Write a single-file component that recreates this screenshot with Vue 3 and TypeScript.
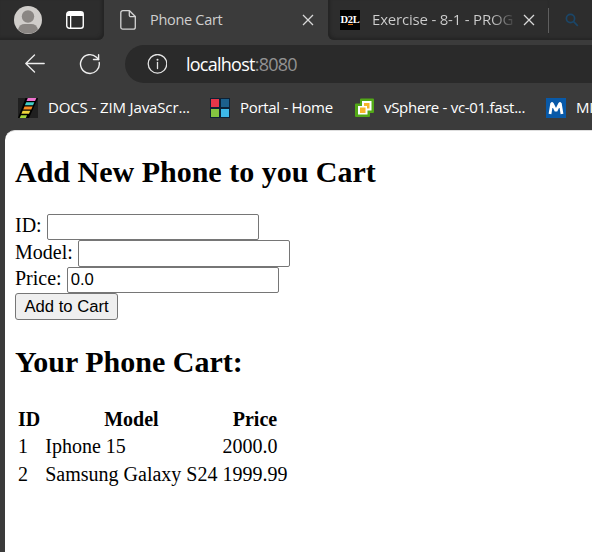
<script setup lang="ts">
import { ref } from 'vue'

interface Phone {
  id: number
  model: string
  price: string
}

const id = ref('')
const model = ref('')
const price = ref('0.0')

const phones = ref<Phone[]>([
  { id: 1, model: 'Iphone 15', price: '2000.0' },
  { id: 2, model: 'Samsung Galaxy S24', price: '1999.99' },
])

function addPhone(): void {
  phones.value.push({ id: Number(id.value), model: model.value, price: price.value })
}
</script>

<template>
  <div class="browser">
    <header class="tabs">
      <div class="lead">
        <svg class="avatar" width="28" height="28" viewBox="0 0 28 28">
          <circle cx="14" cy="14" r="14" fill="#d0cdca" />
          <path d="M4 23.400C5 19.800 7.600 18 10.500 18h7C20.400 18 23 19.800 24 23.400A14 14 0 0 1 4 23.400z" fill="#8a8683" />
          <circle cx="14" cy="10.500" r="6.200" fill="#8a8683" />
        </svg>
        <svg class="panes" width="18" height="18" viewBox="0 0 18 18">
          <rect x="0.750" y="0.750" width="16.500" height="16.500" rx="2.500" fill="none" stroke="#fff" stroke-width="1.400" />
          <path d="M1 5V3a2 2 0 0 1 2-2h12a2 2 0 0 1 2 2v2zM4 5h1.300v12H4z" fill="#fff" />
        </svg>
      </div>
      <div class="tab active">
        <svg class="doc" width="16" height="20" viewBox="0 0 16 20" fill="none" stroke="#d4d4d4" stroke-width="1.300" stroke-linejoin="round">
          <path d="M2.800.7H9.500L15.300 6.500V17.200a2 2 0 0 1-2 2H2.800a2 2 0 0 1-2-2V2.700a2 2 0 0 1 2-2z" />
          <path d="M9.300.8V5.200a1.500 1.500 0 0 0 1.500 1.500h4.400" />
        </svg>
        <span class="title">Phone Cart</span>
        <svg class="close" width="12" height="12" viewBox="0 0 12 12" stroke="#d8d8d8" stroke-width="1.300">
          <path d="M1 1l10 10M11 1L1 11" />
        </svg>
      </div>
      <div class="tab second">
        <span class="d2l">D<i>2</i>L</span>
        <span class="title faded">Exercise - 8-1 - PROG</span>
        <svg class="close" width="12" height="12" viewBox="0 0 12 12" stroke="#d8d8d8" stroke-width="1.300">
          <path d="M1 1l10 10M11 1L1 11" />
        </svg>
      </div>
      <i class="separator"></i>
      <svg class="search" width="14" height="14" viewBox="0 0 14 14" fill="none" stroke="#1b4668" stroke-width="1.700">
        <circle cx="5.500" cy="5.500" r="4.100" />
        <path d="M8.600 8.600l4.200 4.200" />
      </svg>
    </header>

    <div class="toolbar">
      <svg class="back" width="20" height="20" viewBox="0 0 20 20" fill="none" stroke="#eee" stroke-width="1.300" stroke-linecap="round" stroke-linejoin="round">
        <path d="M19.200 9.500H.8M9.500 1L.8 9.500l8.700 8.500" />
      </svg>
      <svg class="reload" width="22" height="22" viewBox="0 0 22 22" fill="none" stroke="#eee" stroke-width="1.400" stroke-linecap="round" stroke-linejoin="round">
        <path d="M20.200 9.500A9.400 9.400 0 1 1 17.500 4.300L19.600 6.500" />
        <path d="M19.600 1.800V6.500H14.500" />
      </svg>
      <div class="address">
        <svg width="20" height="20" viewBox="0 0 20 20" fill="none" stroke="#e4e4e4" stroke-width="1.300">
          <circle cx="10.500" cy="9.800" r="9.300" />
          <path d="M10.500 8.500v6" stroke-linecap="round" />
          <circle cx="10.500" cy="5.700" r="1" fill="#e4e4e4" stroke="none" />
        </svg>
        <span class="url">localhost<b>:8080</b></span>
      </div>
    </div>

    <nav class="bookmarks">
      <a class="bookmark docs">
        <svg width="20" height="20" viewBox="0 0 20 20">
          <path fill="#202020" d="M0 0h20v20H0z" />
          <path fill="#000" d="M7.500 0H20L11 20H0z" />
          <path fill="#ed72ce" d="M9.800 0h8.600l-1.300 3H8.500z" />
          <path fill="#43cec8" d="M8.200 4.200h8.100L15 7.200H6.900z" />
          <path fill="#f58a21" d="M6.500 8.400h8.100l-1.300 3H5.200z" />
          <path fill="#efd43b" d="M4.700 12.800h7.600L11 15.800H3.400z" />
          <path fill="#a4d63a" d="M3 17.200h6L7.800 20H1.700z" />
        </svg>
        <span>DOCS - ZIM JavaScr...</span>
      </a>
      <a class="bookmark portal">
        <svg width="20" height="20" viewBox="0 0 20 20">
          <path fill="#0d2135" d="M0 0h20v20H0z" />
          <path fill="#e43649" d="M1 1h8v8H1z" />
          <path fill="#1c608c" d="M11 1h8v8h-8z" />
          <path fill="#84c441" d="M1 11h8v8H1z" />
          <path fill="#3db9e9" d="M11 11h8v8h-8z" />
        </svg>
        <span>Portal - Home</span>
      </a>
      <a class="bookmark vsphere">
        <svg width="20" height="20" viewBox="0 0 20 20">
          <path fill="#52a817" d="M6 .5h12a1 1 0 0 1 1 1V14a1 1 0 0 1-1 1h-3v3a1 1 0 0 1-1 1H1a1 1 0 0 1-1-1V6.500a1 1 0 0 1 1-1h4v-4a1 1 0 0 1 1-1z" />
          <path fill="#fff" d="M7 3h9.500v9.500h-4v4H3V8h4z" />
          <path fill="#f8b52a" d="M9 5h5.500v5.500H12V8H9zM5 9.500h5.500V15H5z" />
        </svg>
        <span>vSphere - vc-01.fast...</span>
      </a>
      <a class="bookmark mi">
        <svg width="20" height="20" viewBox="0 0 20 20">
          <path fill="#0859a8" d="M0 0h20v20H0z" />
          <path fill="none" stroke="#fff" stroke-width="2.800" stroke-linejoin="bevel" d="M4 16L5.700 5.500h.6L10 13l3.700-7.500h.6L16 16" />
        </svg>
        <span>MI</span>
      </a>
    </nav>

    <main class="page">
      <h2 class="first">Add New Phone to you Cart</h2>
      <form @submit.prevent="addPhone">
        <label class="row id"><span>ID:</span> <input v-model="id" type="text" /></label>
        <label class="row model"><span>Model:</span> <input v-model="model" type="text" /></label>
        <label class="row price"><span>Price:</span> <input v-model="price" type="text" /></label>
        <button type="submit">Add to Cart</button>
      </form>
      <h2 class="next">Your Phone Cart:</h2>
      <table>
        <thead>
          <tr><th>ID</th><th>Model</th><th>Price</th></tr>
        </thead>
        <tbody>
          <tr v-for="phone in phones" :key="phone.id">
            <td>{{ phone.id }}</td>
            <td>{{ phone.model }}</td>
            <td>{{ phone.price }}</td>
          </tr>
        </tbody>
      </table>
    </main>
  </div>
</template>

<style>
body {
  background: #3b3b3b;
  overflow: hidden;
}
</style>

<style scoped>
.browser {
  width: 592px;
  height: 552px;
  overflow: hidden;
  display: flex;
  flex-direction: column;
  background: #3b3b3b;
  color: #fff;
  font-family: "Open Sans", "Noto Sans", sans-serif;
  white-space: nowrap;
}
svg {
  display: block;
  flex: none;
}
.tabs {
  display: flex;
  height: 40px;
  flex: none;
}
.lead {
  box-sizing: border-box;
  width: 104px;
  height: 40px;
  padding-left: 14px;
  display: flex;
  align-items: center;
  gap: 24px;
  background: #2d2d2d;
  border-radius: 0 0 6px 0;
  box-shadow: inset -2px -2px 3px #242424;
}
.tab {
  box-sizing: border-box;
  display: flex;
  align-items: center;
  height: 40px;
}
.active {
  width: 224px;
  padding: 0 14px 0 16px;
}
.second {
  width: 220px;
  padding: 0 13px 0 12px;
  background: #2d2d2d;
  border-radius: 0 0 0 6px;
  box-shadow: inset 2px -2px 3px #242424;
}
.title {
  color: #cfcfcf;
  font-size: 14.5px;
  line-height: 20px;
  letter-spacing: -0.3px;
  margin-left: 14px;
}
.close {
  margin-left: auto;
}
.d2l {
  width: 20px;
  height: 20px;
  background: #000;
  color: #fff;
  font: bold 10.500px/20px "Liberation Serif", serif;
  letter-spacing: -0.3px;
  text-align: center;
  flex: none;
}
.d2l i {
  font-style: normal;
  background: linear-gradient(#e87511, #e87511) 0 100% / 100% 1.500px no-repeat;
}
.faded {
  margin-left: 12px;
  padding-bottom: 2px;
  font-size: 15px;
  letter-spacing: -0.2px;
  background: linear-gradient(90deg, #cfcfcf 84%, #444 100%);
  background-clip: text;
  color: transparent;
}
.separator {
  width: 44px;
  height: 40px;
  flex: none;
  background: linear-gradient(#747474, #747474) 0 8px / 1px 25px no-repeat #2d2d2d;
  box-shadow: inset 0 -2px 2px #262626;
}
.search {
  margin: 13px 0 0 -27px;
}
.toolbar {
  display: flex;
  align-items: center;
  height: 38px;
  padding: 5px 0 0 25px;
  flex: none;
}
.reload {
  margin-left: 34px;
}
.address {
  display: flex;
  align-items: center;
  flex: 1;
  height: 38px;
  margin-left: 24px;
  padding-left: 22px;
  background: #2a2a2a;
  border-radius: 19px 0 0 19px;
}
.url {
  margin-left: 19px;
  padding-bottom: 1px;
  font-size: 18px;
  letter-spacing: -0.75px;
}
.url b {
  font-weight: 400;
  color: #929292;
}
.bookmarks {
  display: flex;
  height: 47px;
  flex: none;
  padding: 2px 0 0 18px;
  box-sizing: border-box;
}
.bookmark {
  display: flex;
  align-items: center;
  flex: none;
  gap: 10px;
  font-size: 15px;
  letter-spacing: -0.3px;
}
.bookmark span {
  padding-bottom: 2px;
}
.docs {
  width: 192px;
  letter-spacing: -0.13px;
}
.portal {
  width: 145px;
}
.vsphere {
  width: 191px;
  gap: 9px;
}
.page {
  flex: 1;
  box-sizing: border-box;
  margin-left: 5px;
  padding: 0 10px;
  background: #fff;
  border-top: 1px solid #dedede;
  border-radius: 10px 0 0 0;
  color: #000;
  font-family: "Liberation Serif", "Times New Roman", serif;
  font-size: 20px;
}
h2 {
  font-size: 30px;
  line-height: 34px;
  margin: 0;
}
.first {
  padding: 24px 0 25px;
}
.next {
  padding: 25px 0 25px;
}
form {
  display: flex;
  flex-direction: column;
  align-items: flex-start;
}
.row {
  display: flex;
  align-items: center;
  height: 26px;
  gap: 5px;
}
.row.model {
  height: 27px;
}
.row span {
  padding-bottom: 3px;
}
input {
  box-sizing: border-box;
  width: 212px;
  height: 100%;
  margin: 0;
  padding: 1px 3px;
  border: 1px solid #767676;
  border-radius: 2px;
  background: #fff;
  color: #000;
  font: 16.667px "Liberation Sans", Arial, sans-serif;
}
button {
  box-sizing: border-box;
  width: 103px;
  height: 27px;
  padding: 0;
  border: 1px solid #767676;
  border-radius: 3px;
  background: #efefef;
  color: #000;
  font: 16.667px "Liberation Sans", Arial, sans-serif;
}
table {
  margin-left: -1px;
  border-collapse: separate;
  border-spacing: 3px 2.500px;
  line-height: 23px;
}
td,
th {
  padding: 1px;
}
th {
  padding-top: 2px;
}
tr + tr td {
  padding-top: 2px;
}
</style>
